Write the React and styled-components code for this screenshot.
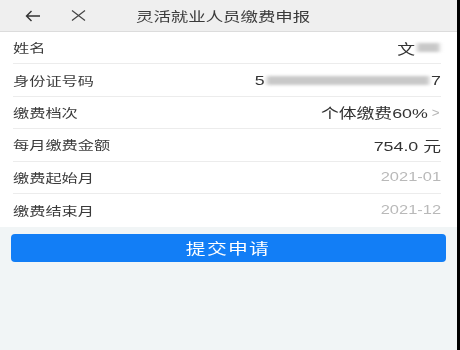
import React from "react";
import styled, { createGlobalStyle } from "styled-components";

const GlobalStyle = createGlobalStyle`
  html, body {
    margin: 0;
    padding: 0;
    background: #000;
  }
  body {
    font-family: "Liberation Sans", "Noto Sans CJK SC", sans-serif;
  }
`;

/* the capture is stretched sideways, so text gets a horizontal scale */
const STRETCH = 1.32;

const Screen = styled.div`
  width: 457px;
  height: 350px;
  background: #f1f5f6;
  display: flex;
  flex-direction: column;
  overflow: hidden;
`;

const NavBar = styled.header`
  height: 32px;
  background: #efefef;
  border-bottom: 1px solid #dcdcdc;
  display: flex;
  align-items: center;
  padding-left: 22px;
  box-sizing: border-box;
  flex-shrink: 0;
`;

const NavIcon = styled.span`
  display: flex;
  align-items: center;
  justify-content: center;
  width: 22px;
  margin-right: ${(p) => p.gap || 0}px;
`;

const Title = styled.h1`
  margin: 0;
  font-size: 13px;
  font-weight: 400;
  color: #3a3a3a;
  transform: scaleX(${STRETCH + 0.02});
  transform-origin: left center;
`;

const List = styled.section`
  background: #fff;
  padding: 0 16px 0 13px;
`;

const Row = styled.div`
  display: flex;
  align-items: center;
  justify-content: space-between;
  border-bottom: ${(p) => (p.last ? "none" : "1px solid #ececec")};
  height: ${(p) => (p.last ? 33 : 31.4)}px;
`;

const Label = styled.span`
  font-size: 12px;
  color: #3a3a3a;
  transform: scaleX(${STRETCH + 0.03});
  transform-origin: left center;
`;

const Value = styled.span`
  display: flex;
  align-items: center;
  font-size: ${(p) => (p.muted ? 12 : 13.5)}px;
  color: ${(p) => (p.muted ? "#b9b9b9" : "#333")};
  white-space: pre;
  transform: scaleX(${(p) => (p.muted ? STRETCH + 0.05 : STRETCH)});
  transform-origin: right center;
`;

const Blur = styled.span`
  display: inline-block;
  width: ${(p) => p.w}px;
  height: 9px;
  background: #c8c8c8;
  filter: blur(1.5px);
  margin: 0 2px 0 1px;
`;

const Chevron = styled.span`
  color: #b5b5b5;
  font-size: 13.5px;
  margin-left: 2px;
  transform: scaleX(0.75);
`;

const Footer = styled.div`
  padding: 7px 11px 0 11px;
`;

const SubmitButton = styled.button`
  width: 100%;
  height: 28px;
  border: none;
  border-radius: 4px;
  background: #127ef6;
  color: #fff;
  font-family: inherit;
  padding: 0;
`;

const ButtonText = styled.span`
  display: inline-block;
  font-size: 15px;
  letter-spacing: 1px;
  transform: scaleX(${STRETCH});
`;

const BackIcon = () => (
  <svg width="16" height="12" viewBox="0 0 16 12" fill="none" stroke="#333" strokeWidth="1.4">
    <path d="M15 6H1.5M6.5 1L1.5 6l5 5" />
  </svg>
);

const CloseIcon = () => (
  <svg width="15" height="11" viewBox="0 0 15 11" fill="none" stroke="#444" strokeWidth="1.2">
    <path d="M1 0.5l13 10M14 0.5L1 10.5" />
  </svg>
);

const rows = [
  { label: "姓名", value: <>文<Blur w={17} /></> },
  { label: "身份证号码", value: <>5<Blur w={123} />7</> },
  { label: "缴费档次", value: <>个体缴费60%<Chevron>&gt;</Chevron></> },
  { label: "每月缴费金额", value: "754.0 元" },
  { label: "缴费起始月", value: "2021-01", muted: true },
  { label: "缴费结束月", value: "2021-12", muted: true },
];

export default function App() {
  return (
    <>
      <GlobalStyle />
      <Screen>
        <NavBar>
          <NavIcon gap={23}><BackIcon /></NavIcon>
          <NavIcon gap={47}><CloseIcon /></NavIcon>
          <Title>灵活就业人员缴费申报</Title>
        </NavBar>
        <List>
          {rows.map((r, i) => (
            <Row key={r.label} last={i === rows.length - 1}>
              <Label>{r.label}</Label>
              <Value muted={r.muted}>{r.value}</Value>
            </Row>
          ))}
        </List>
        <Footer>
          <SubmitButton>
            <ButtonText>提交申请</ButtonText>
          </SubmitButton>
        </Footer>
      </Screen>
    </>
  );
}
